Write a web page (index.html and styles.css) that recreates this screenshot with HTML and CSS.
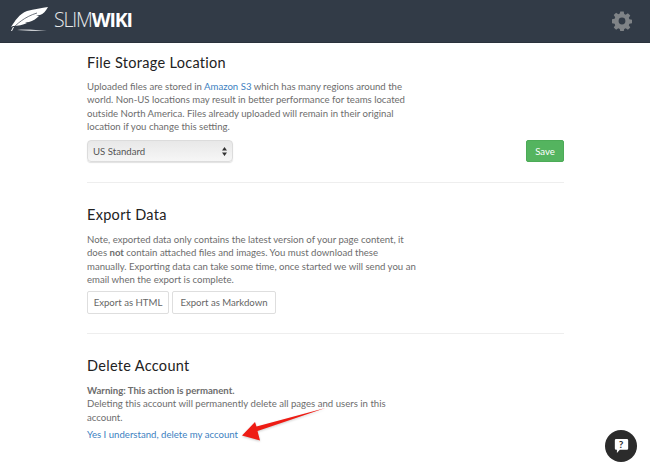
FILE: index.html
```html
<!DOCTYPE html>
<html lang="en">
<head>
<meta charset="utf-8">
<title>SlimWiki settings</title>
<link rel="stylesheet" href="styles.css">
</head>
<body>
<header class="topbar">
  <div class="brand">
    <svg class="feather" width="40" height="27" viewBox="11 6 40 27" aria-hidden="true">
      <path d="M11 27 C15 21 19 14 27 11 C34 9 42 8 48 7 C46 11 43 14 40 15 L36 15.500 L39 16 C36 19 33 21 29 22 L25 22.500 L27 23 C23 25 18 26 13 26 Z" fill="#fff"/>
      <path d="M11 30 C17 24 24 17 37 13" fill="none" stroke="#323b47" stroke-width=".7"/>
      <path d="M11 31 L13 27 L14 27 L12 31 Z" fill="#fff"/>
      <path d="M17 30 C26 29 36 30 47 31 C36 31 26 31 17 30 Z" fill="#c9ccd0"/>
    </svg>
    <span class="wordmark">SLIM<b>WIKI</b></span>
  </div>
  <svg class="gear" width="20" height="20" viewBox="0 0 20 20" aria-hidden="true">
    <path fill-rule="evenodd" d="M8.300 0.500h3.400l.5 2.600 1.500.6 2.200-1.500 2.400 2.400-1.500 2.200.6 1.500 2.600.5v3.400l-2.600.5-.6 1.500 1.500 2.200-2.400 2.400-2.200-1.500-1.500.6-.5 2.600H8.300l-.5-2.600-1.500-.6-2.200 1.500-2.400-2.400 1.500-2.200-.6-1.500-2.600-.5V8.300l2.600-.5.6-1.500-1.500-2.200 2.400-2.400 2.200 1.500 1.500-.6zM10 6.600a3.400 3.400 0 1 0 0 6.800 3.400 3.400 0 0 0 0-6.800z" fill="#7f8387"/>
  </svg>
</header>
<main class="content">
  <section class="panel panel-storage">
    <h2>File Storage Location</h2>
    <p class="copy">Uploaded files are stored in <a href="#">Amazon S3</a> which has many regions around the world. Non-US locations may result in better performance for teams located outside North America. Files already uploaded will remain in their original location if you change this setting.</p>
    <div class="storage-row">
      <div class="select">
        <span>US Standard</span>
        <svg width="5" height="9" viewBox="0 0 5 9" aria-hidden="true"><path d="M2.500 0 5 3.500H0zM2.500 9 0 5.500h5z" fill="#333"/></svg>
      </div>
      <button class="btn-save" type="button">Save</button>
    </div>
  </section>
  <section class="panel panel-export">
    <h2>Export Data</h2>
    <p class="copy">Note, exported data only contains the latest version of your page content, it does <b>not</b> contain attached files and images. You must download these manually. Exporting data can take some time, once started we will send you an email when the export is complete.</p>
    <div class="actions">
      <button class="btn btn-html" type="button">Export as HTML</button>
      <button class="btn btn-md" type="button">Export as Markdown</button>
    </div>
  </section>
  <section class="panel panel-delete">
    <h2>Delete Account</h2>
    <p class="copy"><b>Warning: This action is permanent.</b><br>Deleting this account will permanently delete all pages and users in this account.</p>
    <p class="confirm"><a href="#">Yes I understand, delete my account</a></p>
  </section>
</main>
<svg class="arrow" width="90" height="40" viewBox="240 405 90 40" aria-hidden="true">
  <path d="M325.500 408 L257.500 431 L260 440.500 L242 435.500 L255 422 L256.500 426.500 Z" fill="#ee1c14"/>
</svg>
<div class="help">
  <svg width="15" height="16" viewBox="0 0 18 19" aria-hidden="true">
    <path d="M2.500 1h13a1.500 1.500 0 0 1 1.500 1.500v10a1.500 1.500 0 0 1-1.500 1.500H7l-3.500 4v-4h-1A1.500 1.500 0 0 1 1 12.500v-10A1.500 1.500 0 0 1 2.500 1z" fill="#fff"/>
  </svg>
  <span class="help-mark">?</span>
</div>
</body>
</html>
```
FILE: styles.css
```css
* { box-sizing: border-box; }
html, body { margin: 0; height: 100%; }
body {
  position: relative;
  overflow: hidden;
  background: #fff;
  color: #6d6d6d;
  font-family: Lato, "Open Sans", sans-serif;
  font-size: 9.6px;
  line-height: 13.333px;
}
.topbar {
  height: 43px;
  background: #323b47;
  border-bottom: 1px solid #2a323c;
  display: flex;
  align-items: center;
  justify-content: space-between;
  padding: 0 18px 0 11px;
}
.brand { display: flex; align-items: center; margin-top: -3px; }
.feather { margin: 0 3px 0 0; display: block; }
.wordmark {
  font-family: "Open Sans", sans-serif;
  font-size: 19.500px;
  line-height: 27px;
  letter-spacing: -1.150px;
  color: #e9eaec;
  font-weight: 300;
}
.wordmark b { font-weight: 700; color: #fff; }
.gear { display: block; }
.content { padding: 0 86px 0 87px; }
.panel { border-bottom: 1px solid #eeeeee; }
.panel:last-child { border-bottom: 0; }
.panel-storage { padding-top: 10px; height: 140px; }
.panel-export { padding-top: 22px; height: 151px; }
.panel-delete { padding-top: 22px; }
h2 {
  margin: 0 0 7px;
  font-size: 14.500px;
  line-height: 20px;
  font-weight: 400;
  color: #222;
  letter-spacing: .3px;
}
.panel-export h2, .panel-delete h2 { margin-bottom: 8px; }
.copy { margin: 0; width: 332px; }
.copy b { font-weight: 700; }
a { color: #3d7fc1; text-decoration: none; }
.storage-row {
  display: flex;
  justify-content: space-between;
  align-items: center;
  margin-top: 7px;
}
.select {
  width: 146px;
  height: 22px;
  padding: 0 5px;
  border: 1px solid #dcdcdc;
  border-radius: 4px;
  background: linear-gradient(#e8e8e8, #f6f6f6);
  box-shadow: 0 1px 1px rgba(0,0,0,.12);
  display: flex;
  align-items: center;
  justify-content: space-between;
  color: #555;
  font-size: 9.6px;
}
.btn-save {
  width: 38px;
  height: 22px;
  padding: 0;
  background: #54b45f;
  border: 1px solid #4cab57;
  border-radius: 2px;
  color: #fff;
  font: inherit;
}
.actions { display: flex; gap: 3px; margin-top: 5px; }
.btn {
  height: 23px;
  padding: 0;
  background: #fff;
  border: 1px solid #dedede;
  border-radius: 2px;
  color: #666;
  font: inherit;
}
.btn-html { width: 82px; }
.btn-md { width: 104px; }
.confirm { margin: 4px 0 0; }
.arrow { position: absolute; left: 240px; top: 405px; filter: drop-shadow(0 1px 1px rgba(0,0,0,.2)); }
.help {
  position: absolute;
  left: 605px;
  top: 430px;
  width: 32px;
  height: 32px;
  border-radius: 50%;
  background: #2b2b2b;
  display: flex;
  align-items: center;
  justify-content: center;
}
.help svg { display: block; }
.help-mark {
  position: absolute;
  left: 0;
  right: 0;
  top: 7px;
  text-align: center;
  font-size: 10px;
  font-weight: 700;
  line-height: 14px;
  color: #2b2b2b;
}
```
